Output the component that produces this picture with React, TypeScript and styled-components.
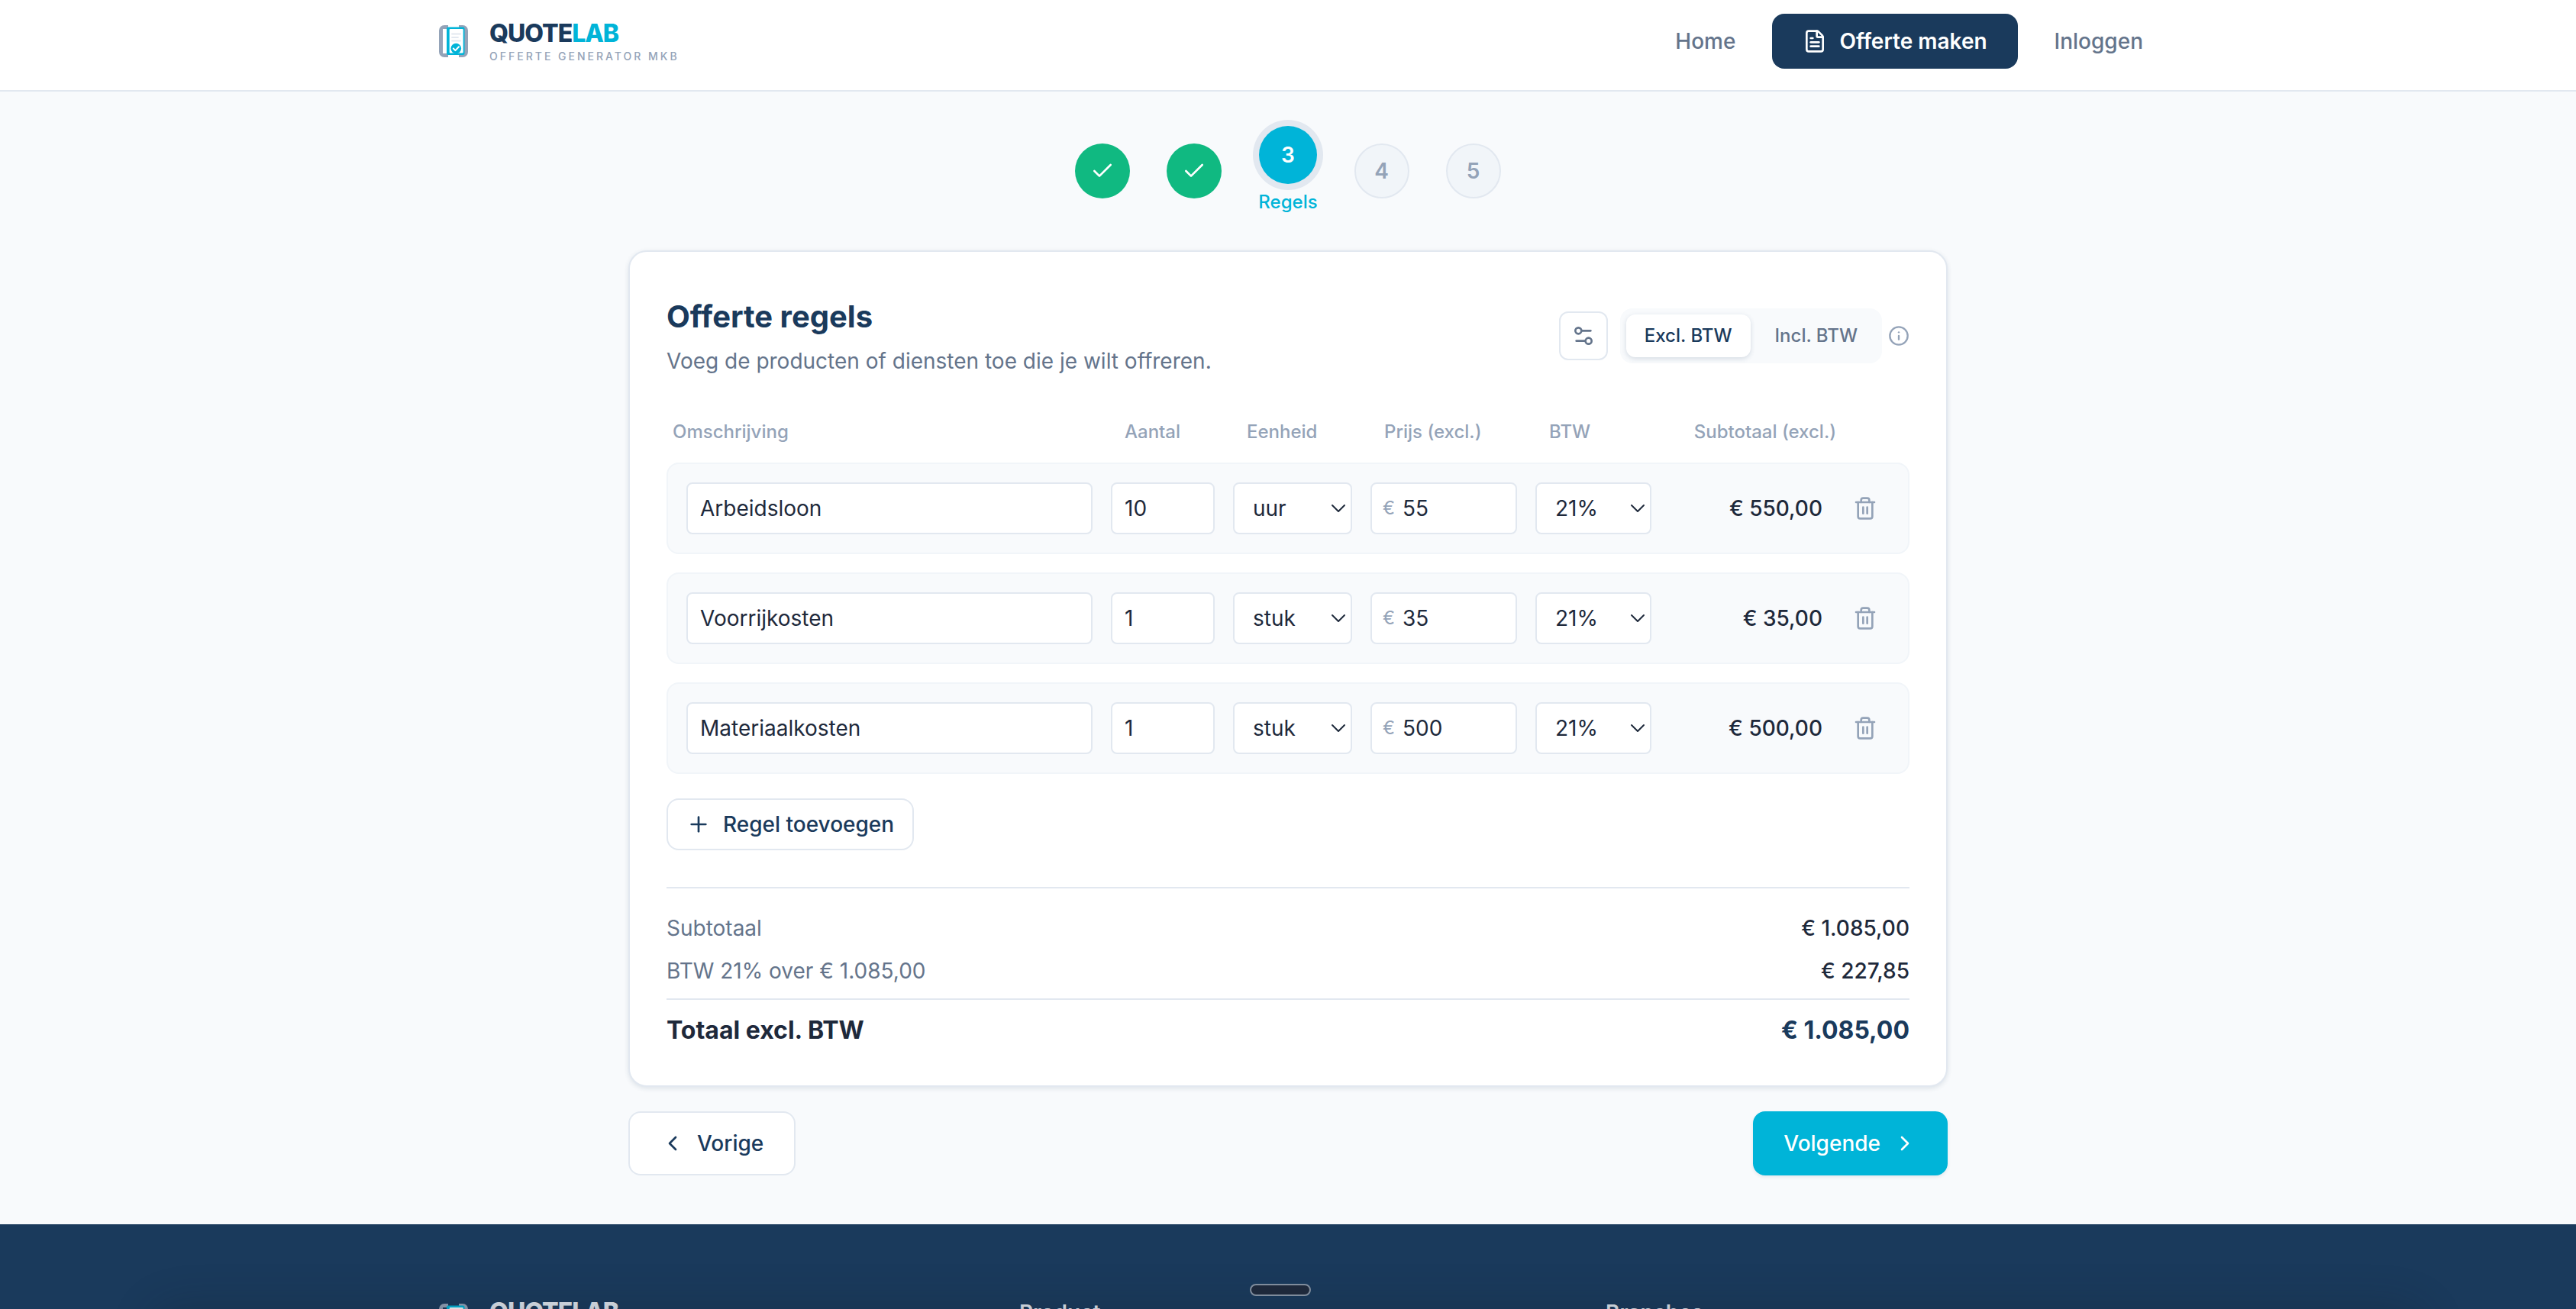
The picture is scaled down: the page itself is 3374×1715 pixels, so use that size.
import React, { useState } from 'react';
import styled, { createGlobalStyle, css } from 'styled-components';
import {
  Check,
  ChevronLeft,
  ChevronRight,
  FileText,
  Info,
  Plus,
  Settings2,
  Trash2,
} from 'lucide-react';

const color = {
  navy: '#1a3a5c',
  cyan: '#00b4d8',
  green: '#10b981',
  ink: '#1e293b',
  slate: '#64748b',
  muted: '#94a3b8',
  line: '#e2e8f0',
  soft: '#f1f5f9',
  page: '#f8fafc',
  white: '#ffffff',
};

const GlobalStyle = createGlobalStyle`
  *, *::before, *::after { box-sizing: border-box; }
  body {
    margin: 0;
    background: ${color.page};
    color: ${color.ink};
    font-family: Inter, "Liberation Sans", sans-serif;
    font-size: 28px;
    line-height: 40px;
    -webkit-font-smoothing: antialiased;
  }
  button, input, select { font: inherit; color: inherit; margin: 0; }
  button { cursor: pointer; }
  svg { display: block; flex: none; }
`;

const Page = styled.div`
  display: flex;
  flex-direction: column;
  height: 100vh;
  overflow: hidden;
`;

const Container = styled.div`
  width: 100%;
  max-width: 2240px;
  margin: 0 auto;
`;

const Header = styled.header`
  flex: none;
  background: ${color.white};
  border-bottom: 2px solid ${color.line};
  padding: 18px 0 28px;
`;

const HeaderRow = styled(Container)`
  display: flex;
  align-items: center;
  justify-content: space-between;
`;

const Nav = styled.nav`
  display: flex;
  align-items: center;
  gap: 48px;
`;

const NavLink = styled.a`
  color: ${color.slate};
  font-weight: 500;
  text-decoration: none;
`;

const NavButton = styled.a`
  display: flex;
  align-items: center;
  gap: 16px;
  padding: 16px 40px;
  border-radius: 16px;
  background: ${color.navy};
  color: ${color.white};
  font-weight: 600;
  text-decoration: none;
`;

const LogoLink = styled.a`
  display: flex;
  align-items: center;
  gap: 20px;
  text-decoration: none;
`;

const LogoMark = styled.svg`
  width: 54px;
  height: 42px;
`;

const LogoWords = styled.span`
  display: flex;
  flex-direction: column;
  gap: 2px;
`;

const LogoName = styled.span<{ $light?: boolean }>`
  color: ${(p) => (p.$light ? color.line : color.navy)};
  font-size: 32px;
  line-height: 38px;
  font-weight: 800;
  letter-spacing: -1px;
`;

const LogoAccent = styled.span<{ $light?: boolean }>`
  color: ${(p) => (p.$light ? color.line : color.cyan)};
`;

const Tagline = styled.span`
  color: ${color.muted};
  font-size: 14px;
  line-height: 18px;
  font-weight: 500;
  letter-spacing: 3px;
`;

const Main = styled.main`
  flex: none;
  width: 100%;
  max-width: 1728px;
  margin: 0 auto;
  padding: 45px 0 64px;
`;

const Steps = styled.ol`
  display: flex;
  align-items: center;
  justify-content: center;
  gap: 48px;
  margin: 0 0 45px;
  padding: 0;
  list-style: none;
`;

const Step = styled.li`
  display: flex;
  flex-direction: column;
  align-items: center;
  gap: 6px;
`;

type StepState = 'done' | 'current' | 'todo';

const StepDot = styled.span<{ $state: StepState }>`
  display: flex;
  align-items: center;
  justify-content: center;
  width: 72px;
  height: 72px;
  border-radius: 50%;
  font-weight: 600;
  ${(p) =>
    p.$state === 'done' &&
    css`
      background: ${color.green};
      color: ${color.white};
    `}
  ${(p) =>
    p.$state === 'current' &&
    css`
      width: 76px;
      height: 76px;
      background: ${color.cyan};
      color: ${color.white};
      box-shadow: 0 0 0 8px ${color.line};
    `}
  ${(p) =>
    p.$state === 'todo' &&
    css`
      background: ${color.soft};
      border: 2px solid ${color.line};
      color: ${color.muted};
    `}
`;

const StepLabel = styled.span`
  color: ${color.cyan};
  font-size: 24px;
  line-height: 36px;
  font-weight: 500;
`;

const Card = styled.section`
  padding: 56px 48px 48px;
  background: ${color.white};
  border: 2px solid ${color.line};
  border-radius: 24px;
  box-shadow: 0 2px 6px rgba(26, 58, 92, 0.12);
`;

const CardHead = styled.div`
  display: flex;
  align-items: center;
  justify-content: space-between;
  margin-bottom: 54px;
`;

const Title = styled.h1`
  margin: 0 0 8px;
  color: ${color.navy};
  font-size: 40px;
  line-height: 58px;
  font-weight: 700;
`;

const Subtitle = styled.p`
  margin: 0;
  color: ${color.slate};
  line-height: 42px;
`;

const Tools = styled.div`
  display: flex;
  align-items: center;
`;

const SquareButton = styled.button`
  display: flex;
  align-items: center;
  justify-content: center;
  width: 64px;
  height: 64px;
  margin-right: 16px;
  padding: 0;
  background: ${color.white};
  border: 2px solid ${color.line};
  border-radius: 12px;
  color: ${color.slate};
`;

const Segment = styled.div`
  display: flex;
  gap: 8px;
  padding: 8px;
  margin-right: 8px;
  border-radius: 16px;
  background: ${color.page};
`;

const SegmentButton = styled.button<{ $active: boolean }>`
  height: 56px;
  padding: 0 24px;
  border: 0;
  border-radius: 12px;
  font-size: 24px;
  line-height: 36px;
  font-weight: 500;
  background: ${(p) => (p.$active ? color.white : 'transparent')};
  color: ${(p) => (p.$active ? color.navy : color.slate)};
  box-shadow: ${(p) => (p.$active ? '0 2px 6px rgba(26, 58, 92, 0.16)' : 'none')};
`;

const InfoButton = styled.button`
  padding: 0;
  border: 0;
  background: none;
  color: ${color.muted};
`;

const Lines = styled.table`
  display: block;
`;

const LinesHead = styled.thead`
  display: block;
  margin-bottom: 22px;
`;

const LinesBody = styled.tbody`
  display: flex;
  flex-direction: column;
  gap: 24px;
`;

const lineColumns = css`
  display: grid;
  grid-template-columns: minmax(0, 1fr) 136px 156px 192px 152px 200px 64px;
  column-gap: 24px;
  align-items: center;
`;

const HeadRow = styled.tr`
  ${lineColumns}
  padding: 0 8px;
`;

const HeadCell = styled.th<{ $end?: boolean }>`
  padding: 0;
  color: ${color.muted};
  font-size: 24px;
  line-height: 36px;
  font-weight: 500;
  text-align: ${(p) => (p.$end ? 'right' : 'left')};
`;

const LineRow = styled.tr`
  ${lineColumns}
  padding: 24px;
  background: ${color.page};
  border: 2px solid ${color.soft};
  border-radius: 16px;
`;

const Cell = styled.td`
  position: relative;
  display: flex;
  justify-content: center;
  padding: 0;
`;

const control = css`
  width: 100%;
  height: 68px;
  background: ${color.white};
  border: 2px solid ${color.line};
  border-radius: 8px;
  color: ${color.ink};
  outline: none;
`;

const Field = styled.input<{ $prefixed?: boolean }>`
  ${control}
  padding: 0 16px 0 ${(p) => (p.$prefixed ? '40px' : '16px')};
`;

const Prefix = styled.span`
  position: absolute;
  top: 50%;
  left: 16px;
  transform: translateY(-50%);
  color: ${color.muted};
  font-size: 24px;
`;

const Picker = styled.select`
  ${control}
  appearance: none;
  padding: 0 40px 0 24px;
`;

const Caret = styled.svg`
  position: absolute;
  top: 50%;
  right: 8px;
  width: 20px;
  height: 12px;
  transform: translateY(-50%);
  pointer-events: none;
`;

const Amount = styled.td`
  padding: 0;
  font-weight: 500;
  text-align: right;
  white-space: nowrap;
`;

const DeleteButton = styled.button`
  padding: 16px;
  border: 0;
  background: none;
  color: ${color.muted};
`;

const Button = styled.button<{ $primary?: boolean; $small?: boolean }>`
  display: inline-flex;
  align-items: center;
  gap: 16px;
  height: ${(p) => (p.$small ? '68px' : '84px')};
  padding: 0 ${(p) => (p.$small ? '24px' : '40px')};
  border-radius: 16px;
  font-weight: 500;
  border: 2px solid ${color.line};
  background: ${color.white};
  color: ${color.navy};
  ${(p) =>
    p.$primary &&
    css`
      border: 0;
      background: ${color.cyan};
      color: ${color.white};
      box-shadow: 0 2px 4px rgba(26, 58, 92, 0.1);
    `}
`;

const AddRow = styled.div`
  display: flex;
  margin: 32px 0 48px;
`;

const Totals = styled.dl`
  display: flex;
  flex-direction: column;
  gap: 16px;
  margin: 0;
  padding-top: 32px;
  border-top: 2px solid ${color.line};
`;

const TotalRow = styled.div<{ $grand?: boolean }>`
  display: flex;
  justify-content: space-between;
  ${(p) =>
    p.$grand &&
    css`
      padding-top: 16px;
      border-top: 2px solid ${color.line};
      font-size: 32px;
      line-height: 48px;
      font-weight: 700;
    `}
`;

const TotalLabel = styled.dt<{ $grand?: boolean }>`
  color: ${(p) => (p.$grand ? color.ink : color.slate)};
`;

const TotalValue = styled.dd<{ $grand?: boolean }>`
  margin: 0;
  color: ${(p) => (p.$grand ? color.navy : color.ink)};
  font-weight: ${(p) => (p.$grand ? 700 : 500)};
`;

const Actions = styled.div`
  display: flex;
  justify-content: space-between;
  margin-top: 32px;
`;

const Footer = styled.footer`
  flex: 1;
  min-height: 0;
  overflow: hidden;
  padding-top: 96px;
  background: ${color.navy};
`;

const FooterGrid = styled(Container)`
  display: grid;
  grid-template-columns: repeat(3, minmax(0, 1fr));
  column-gap: 64px;
  align-items: start;
`;

const FooterHeading = styled.h2`
  margin: 0;
  color: ${color.line};
  font-size: 28px;
  line-height: 40px;
  font-weight: 600;
`;

const DockShade = styled.div`
  position: fixed;
  left: 200px;
  right: 200px;
  top: 100%;
  height: 80px;
  border-radius: 40px;
  box-shadow: 0 0 56px rgba(24, 32, 44, 0.3);
`;

const DockHandle = styled.button`
  position: fixed;
  left: calc(50% - 50px);
  bottom: 17px;
  width: 80px;
  height: 16px;
  padding: 0;
  border: 2px solid #7f8c9c;
  border-radius: 8px;
  background: ${color.ink};
`;

function Logo({ light }: { light?: boolean }) {
  return (
    <LogoLink href="#" aria-label="QuoteLab">
      <LogoMark viewBox="-8 0 54 42" fill="none" aria-hidden="true">
        <path d="M12 2.5H7A4.5 4.5 0 0 0 2.5 7v28A4.5 4.5 0 0 0 7 39.500h5" stroke={color.muted} strokeWidth="5" />
        <path d="M26 2.500h5A4.500 4.500 0 0 1 35.500 7v28a4.500 4.500 0 0 1-4.500 4.500h-5" stroke={color.muted} strokeWidth="5" />
        <rect x="5" y="5" width="5" height="32" fill={light ? color.navy : color.white} />
        <rect x="10" y="2.500" width="23.500" height="36.500" rx="2" fill={color.cyan} />
        <rect x="13.700" y="5" width="18" height="31.500" rx="1" fill={color.white} />
        <path d="M17 11.500h11M17 16h8M17 20.500h11" stroke={color.line} strokeWidth="1.800" strokeLinecap="round" />
        <circle cx="22.300" cy="30.500" r="6.800" fill={color.cyan} />
        <path d="m18.800 30.500 2.600 2.600 4.600-4.800" stroke={color.white} strokeWidth="2" strokeLinecap="round" strokeLinejoin="round" />
      </LogoMark>
      <LogoWords>
        <LogoName $light={light}>
          QUOTE<LogoAccent $light={light}>LAB</LogoAccent>
        </LogoName>
        <Tagline>OFFERTE GENERATOR MKB</Tagline>
      </LogoWords>
    </LogoLink>
  );
}

function SelectCaret() {
  return (
    <Caret viewBox="0 0 20 12" fill="none" aria-hidden="true">
      <path d="m2 2 8 8 8-8" stroke={color.ink} strokeWidth="2" strokeLinecap="round" strokeLinejoin="round" />
    </Caret>
  );
}

const steps: { name: string; state: StepState }[] = [
  { name: '1', state: 'done' },
  { name: '2', state: 'done' },
  { name: '3', state: 'current' },
  { name: '4', state: 'todo' },
  { name: '5', state: 'todo' },
];

const lines = [
  { label: 'Arbeidsloon', count: '10', unit: 'uur', price: '55', sum: '€ 550,00' },
  { label: 'Voorrijkosten', count: '1', unit: 'stuk', price: '35', sum: '€ 35,00' },
  { label: 'Materiaalkosten', count: '1', unit: 'stuk', price: '500', sum: '€ 500,00' },
];

export default function App() {
  const [mode, setMode] = useState<'excl' | 'incl'>('excl');

  return (
    <Page>
      <GlobalStyle />
      <Header>
        <HeaderRow>
          <Logo />
          <Nav>
            <NavLink href="#">Home</NavLink>
            <NavButton href="#">
              <FileText size={32} />
              Offerte maken
            </NavButton>
            <NavLink href="#">Inloggen</NavLink>
          </Nav>
        </HeaderRow>
      </Header>

      <Main>
        <Steps>
          {steps.map((s) => (
            <Step key={s.name}>
              <StepDot $state={s.state}>
                {s.state === 'done' ? <Check size={32} /> : s.name}
              </StepDot>
              {s.state === 'current' && <StepLabel>Regels</StepLabel>}
            </Step>
          ))}
        </Steps>

        <Card>
          <CardHead>
            <div>
              <Title>Offerte regels</Title>
              <Subtitle>Voeg de producten of diensten toe die je wilt offreren.</Subtitle>
            </div>
            <Tools>
              <SquareButton type="button" aria-label="Kolommen instellen">
                <Settings2 size={32} />
              </SquareButton>
              <Segment>
                <SegmentButton type="button" $active={mode === 'excl'} onClick={() => setMode('excl')}>
                  Excl. BTW
                </SegmentButton>
                <SegmentButton type="button" $active={mode === 'incl'} onClick={() => setMode('incl')}>
                  Incl. BTW
                </SegmentButton>
              </Segment>
              <InfoButton type="button" aria-label="Uitleg over BTW">
                <Info size={28} />
              </InfoButton>
            </Tools>
          </CardHead>

          <Lines>
            <LinesHead>
              <HeadRow>
                <HeadCell scope="col">Omschrijving</HeadCell>
                <HeadCell scope="col">Aantal</HeadCell>
                <HeadCell scope="col">Eenheid</HeadCell>
                <HeadCell scope="col">Prijs (excl.)</HeadCell>
                <HeadCell scope="col">BTW</HeadCell>
                <HeadCell scope="col" $end>Subtotaal (excl.)</HeadCell>
              </HeadRow>
            </LinesHead>
            <LinesBody>
              {lines.map((line) => (
                <LineRow key={line.label}>
                  <Cell>
                    <Field aria-label="Omschrijving" defaultValue={line.label} />
                  </Cell>
                  <Cell>
                    <Field aria-label="Aantal" inputMode="numeric" defaultValue={line.count} />
                  </Cell>
                  <Cell>
                    <Picker aria-label="Eenheid" defaultValue={line.unit}>
                      <option>uur</option>
                      <option>stuk</option>
                    </Picker>
                    <SelectCaret />
                  </Cell>
                  <Cell>
                    <Field aria-label="Prijs (excl.)" inputMode="decimal" defaultValue={line.price} $prefixed />
                    <Prefix>€</Prefix>
                  </Cell>
                  <Cell>
                    <Picker aria-label="BTW" defaultValue="21%">
                      <option>21%</option>
                    </Picker>
                    <SelectCaret />
                  </Cell>
                  <Amount>{line.sum}</Amount>
                  <Cell>
                    <DeleteButton type="button" aria-label="Regel verwijderen">
                      <Trash2 size={32} />
                    </DeleteButton>
                  </Cell>
                </LineRow>
              ))}
            </LinesBody>
          </Lines>

          <AddRow>
            <Button type="button" $small>
              <Plus size={32} />
              Regel toevoegen
            </Button>
          </AddRow>

          <Totals>
            <TotalRow>
              <TotalLabel>Subtotaal</TotalLabel>
              <TotalValue>€ 1.085,00</TotalValue>
            </TotalRow>
            <TotalRow>
              <TotalLabel>BTW 21% over € 1.085,00</TotalLabel>
              <TotalValue>€ 227,85</TotalValue>
            </TotalRow>
            <TotalRow $grand>
              <TotalLabel $grand>Totaal excl. BTW</TotalLabel>
              <TotalValue $grand>€ 1.085,00</TotalValue>
            </TotalRow>
          </Totals>
        </Card>

        <Actions>
          <Button type="button">
            <ChevronLeft size={32} />
            Vorige
          </Button>
          <Button type="button" $primary>
            Volgende
            <ChevronRight size={32} />
          </Button>
        </Actions>
      </Main>

      <Footer>
        <FooterGrid>
          <Logo light />
          <FooterHeading>Product</FooterHeading>
          <FooterHeading>Branches</FooterHeading>
        </FooterGrid>
      </Footer>

      <DockShade />
      <DockHandle type="button" aria-label="Balk tonen" />
    </Page>
  );
}
